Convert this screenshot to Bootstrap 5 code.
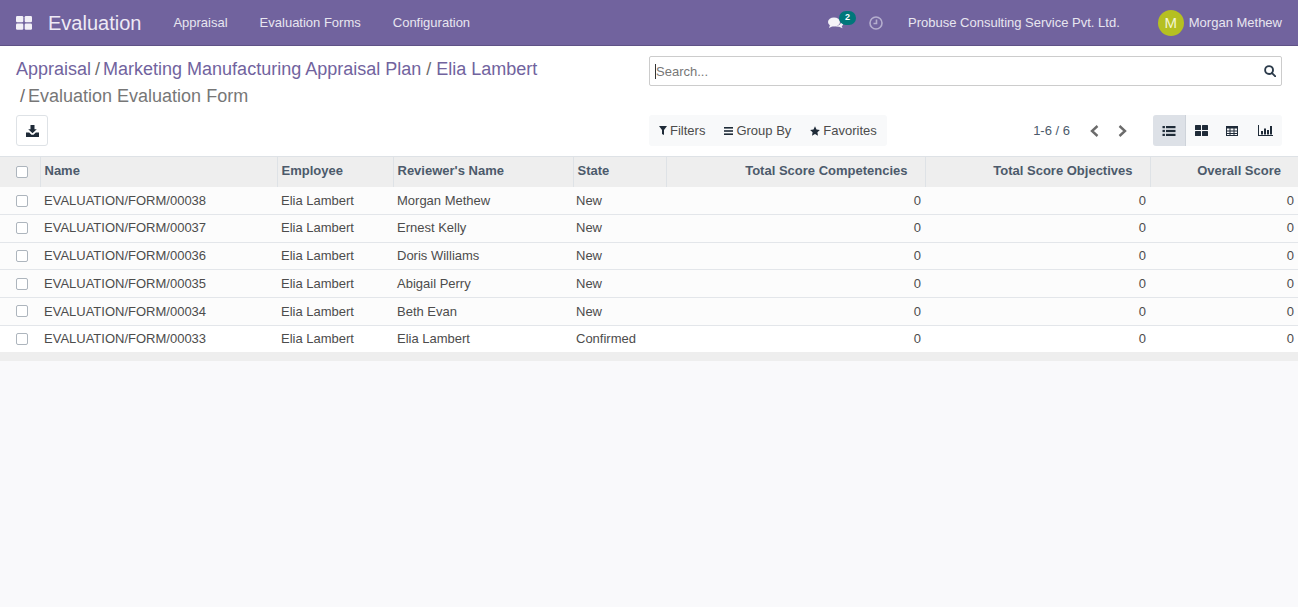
<!DOCTYPE html>
<html lang="en">
<head>
    <meta charset="UTF-8">
    <title>Evaluation</title>
    <link href="https://cdn.jsdelivr.net/npm/bootstrap@5.3.0/dist/css/bootstrap.min.css" rel="stylesheet">
    <style>
        body { background-color: #f9f9fb; font-family: "Liberation Sans", Arial, sans-serif; font-size: 13px; color: #4c4c4c; overflow: hidden; }
        .top-bar { height: 46px; background-color: #71639e; border-bottom: 1px solid #5f5286; color: #e8e6f0; font-size: 13px; padding: 0 16px; }
        .app-name { font-size: 20px; color: #eeeaf5; margin-left: 16px; margin-right: 32px; }
        .menu-link { color: #e8e6f0; text-decoration: none; margin-right: 32px; }
        .msg-wrap { position: relative; width: 17px; height: 14px; margin-right: 24px; }
        .msg-badge { position: absolute; left: 11px; top: -5px; width: 17px; height: 14px; border-radius: 7px; background-color: #00777a; color: #fff; font-size: 9px; font-weight: bold; line-height: 13px; text-align: center; }
        .company-name { margin: 0 38px 0 25px; }
        .avatar-dot { width: 26px; height: 26px; border-radius: 50%; background-color: #b5c021; color: #f3f5d0; font-size: 15px; line-height: 26px; text-align: center; margin-right: 5px; }
        .control-panel { background-color: #fff; height: 111px; padding: 10px 16px 0; border-bottom: 1px solid #dee2e6; }
        .left-side { width: 633px; flex: none; }
        .crumbs { font-size: 18px; line-height: 27px; height: 54px; color: #71639e; }
        .crumbs .sep { color: #6b6b6b; margin: 0 3px 0 4px; }
        .crumbs .sep.wide { margin: 0 5px; }
        .crumbs .cur { color: #777; }
        .btn-export { width: 32px; height: 31px; padding: 0; margin-top: 5px; background: #fff; border: 1px solid #dee2e6; border-radius: 3px; display: flex; align-items: center; justify-content: center; }
        .search-box { height: 30px; border: 1px solid #ccc; border-radius: 2px; padding: 0 5px; color: #777; background: #fff; }
        .search-text { padding-top: 2px; }
        .search-cursor { border-left: 1px solid #333; height: 15px; }
        .tool-row { margin-top: 29px; height: 31px; }
        .filter-group { background-color: #f8f9fa; border-radius: 3px; height: 31px; padding: 0 10px; gap: 19px; color: #4c4c4c; }
        .filter-item { gap: 3px; }
        .pager-text { color: #4c5a6b; margin-left: auto; margin-right: 20px; }
        .pager-prev { margin-right: 19px; }
        .view-group { background-color: #f8f9fa; border-radius: 3px; margin-left: 26px; height: 31px; }
        .view-item { width: 32px; height: 31px; display: flex; align-items: center; justify-content: center; }
        .view-item.on { background-color: #dde1e7; border-right: 1px solid #ced3da; border-radius: 3px 0 0 3px; width: 33px; }
        .view-item .shift-left { margin-right: 4px; }
        .view-item .shift-less { margin-right: 2px; }
        .data-list { width: 100%; table-layout: fixed; border-collapse: collapse; margin: 0; font-size: 13px; color: #4c4c4c; }
        .data-list th { background-color: #eeeeee; height: 29.7px; padding: 0 4px 2px; font-weight: bold; color: #4c5a6b; border-bottom: 0; vertical-align: middle; }
        .data-list th + th { border-left: 1px solid #dee2e6; }
        .data-list td { height: 27.7px; padding: 0 4px; background-color: #fcfcfc; border-top: 1px solid #e3e6ea; vertical-align: middle; }
        .data-list td:nth-child(5) { padding-left: 3px; }
        .data-list tbody tr:first-child td { border-top: 0; }
        .data-list tbody tr:first-child .tick-box { margin-top: 2px; }
        .data-list tbody tr:last-child td { background-color: #fff; height: 27px; }
        .data-list th.num-col { text-align: right; padding-right: 17px; }
        .data-list td.num-col { text-align: right; }
        .tick-box { display: block; width: 12px; height: 12px; border: 1px solid #adb5bd; border-radius: 2px; background: #fff; margin-left: 16px; }
        .data-list th:first-child, .data-list td:first-child { padding: 0; }
        .list-foot { height: 9px; background-color: #eeeeee; }
        .w-check { width: 40px; } .w-name { width: 237px; } .w-emp { width: 116px; } .w-rev { width: 180px; }
        .w-state { width: 93px; } .w-comp { width: 259px; } .w-obj { width: 225px; }
    </style>
</head>
<body>

    <!-- top navbar -->
    <nav class="top-bar d-flex align-items-center">
        <svg width="16" height="14" viewBox="0 0 16 14" fill="#f2f0f7"><rect width="7.3" height="6.2" rx="1.2"/><rect x="8.7" width="7.3" height="6.2" rx="1.2"/><rect y="7.6" width="7.3" height="6.2" rx="1.2"/><rect x="8.7" y="7.6" width="7.3" height="6.2" rx="1.2"/></svg>
        <span class="app-name">Evaluation</span>
        <a class="menu-link" href="#">Appraisal</a>
        <a class="menu-link" href="#">Evaluation Forms</a>
        <a class="menu-link" href="#">Configuration</a>
        <div class="ms-auto d-flex align-items-center">
            <div class="msg-wrap">
                <svg class="d-block" width="16" height="14" viewBox="0 0 16 14" fill="#f4f3f8"><ellipse cx="6" cy="6" rx="6" ry="4.6"/><path d="M2 9l-1 3 4-2z"/><path d="M13 4.5c2 1 3 2.5 2 4.2-.4.7-1 1.2-1.3 1.4l.8 2.2-3.4-1.6c-1.4.1-3-.1-4-.7 3.4.2 6.8-2 5.900-5.500z"/></svg>
                <span class="msg-badge">2</span>
            </div>
            <svg width="14" height="14" viewBox="0 0 14 14" fill="none" stroke="#b5aece" stroke-width="1.6"><circle cx="7" cy="7" r="6"/><path d="M7.500 3.500v4H4.500"/></svg>
            <span class="company-name">Probuse Consulting Service Pvt. Ltd.</span>
            <span class="avatar-dot">M</span>
            <span>Morgan Methew</span>
        </div>
    </nav>

    <!-- control panel -->
    <div class="control-panel d-flex">
        <div class="left-side">
            <div class="crumbs">
                <div><span>Appraisal</span><span class="sep">/</span><span>Marketing Manufacturing Appraisal Plan</span><span class="sep wide">/</span><span>Elia Lambert</span></div>
                <div><span class="sep">/</span><span class="cur">Evaluation Evaluation Form</span></div>
            </div>
            <button class="btn-export" type="button" aria-label="Export">
                <svg width="13" height="12" viewBox="0 0 13 12" fill="#1f2b38"><path d="M4.500 0h4v4.200h2.300L6.500 8.300 2.200 4.200h2.300z"/><path d="M0 7.500h3.200l2.300 2.200h2l2.300-2.200H13V12H0z"/></svg>
            </button>
        </div>
        <div class="flex-grow-1">
            <div class="search-box d-flex align-items-center">
                <span class="search-cursor"></span><span class="search-text">Search...</span>
                <svg class="ms-auto" width="12" height="12" viewBox="0 0 13 13" fill="none" stroke="#2b3a4a" stroke-width="2"><circle cx="5.500" cy="5.500" r="4.300"/><path d="M8.700 8.700L12.300 12.300" stroke-linecap="round"/></svg>
            </div>
            <div class="tool-row d-flex align-items-center">
                <div class="filter-group d-flex align-items-center">
                    <span class="filter-item d-flex align-items-center">
                        <svg width="8" height="9" viewBox="0 0 8 9" fill="#1f2b38"><path d="M0 0h8L5 4v5L3 8V4z"/></svg>Filters</span>
                    <span class="filter-item d-flex align-items-center">
                        <svg width="9" height="8" viewBox="0 0 9 8" fill="#1f2b38"><rect width="9" height="1.600"/><rect y="3.200" width="9" height="1.600"/><rect y="6.400" width="9" height="1.600"/></svg>Group By</span>
                    <span class="filter-item d-flex align-items-center">
                        <svg width="10" height="10" viewBox="0 0 10 10" fill="#1f2b38"><path d="M5 .3l1.500 3.100 3.400.5-2.500 2.400.6 3.400L5 8.100 2 9.700l.6-3.400L.1 3.900l3.400-.5z"/></svg>Favorites</span>
                </div>
                <span class="pager-text">1-6 / 6</span>
                <svg class="pager-prev" width="9" height="12" viewBox="0 0 9 12" fill="none" stroke="#6b6b6b" stroke-width="2.400"><path d="M7.500 1L2 6l5.500 5"/></svg>
                <svg width="9" height="12" viewBox="0 0 9 12" fill="none" stroke="#6b6b6b" stroke-width="2.400"><path d="M1.500 1L7 6l-5.500 5"/></svg>
                <div class="view-group d-flex">
                    <div class="view-item on"><svg width="14" height="10" viewBox="0 0 13 10" fill="#1f2b38"><rect width="2.400" height="2.200"/><rect x="3.500" width="9.500" height="2.200"/><rect y="3.900" width="2.400" height="2.200"/><rect x="3.500" y="3.900" width="9.500" height="2.200"/><rect y="7.800" width="2.400" height="2.200"/><rect x="3.500" y="7.800" width="9.500" height="2.200"/></svg></div>
                    <div class="view-item"><svg class="shift-less" width="13" height="11" viewBox="0 0 13 11" fill="#1f2b38"><rect width="6" height="5" rx=".5"/><rect x="7" width="6" height="5" rx=".5"/><rect y="6" width="6" height="5" rx=".5"/><rect x="7" y="6" width="6" height="5" rx=".5"/></svg></div>
                    <div class="view-item"><svg class="shift-left" width="12" height="10" viewBox="0 0 12 10" fill="none" stroke="#1f2b38"><rect x=".5" y=".5" width="11" height="9"/><path d="M.5 1.500h11" stroke-width="2"/><path d="M.5 5h11M.5 7.500h11M4 1v9M8 1v9"/></svg></div>
                    <div class="view-item"><svg class="shift-less" width="15" height="11" viewBox="0 0 15 11" fill="#1f2b38"><rect width="1" height="11"/><rect y="10" width="15" height="1"/><rect x="3" y="6" width="2" height="3.500"/><rect x="6" y="3.500" width="2" height="6"/><rect x="9" y="5" width="2" height="4.500"/><rect x="12" y="1" width="2" height="8.500"/></svg></div>
                </div>
            </div>
        </div>
    </div>

    <!-- list -->
    <table class="data-list">
        <thead>
            <tr>
                <th class="w-check"><span class="tick-box"></span></th>
                <th class="w-name">Name</th>
                <th class="w-emp">Employee</th>
                <th class="w-rev">Reviewer's Name</th>
                <th class="w-state">State</th>
                <th class="w-comp num-col">Total Score Competencies</th>
                <th class="w-obj num-col">Total Score Objectives</th>
                <th class="num-col">Overall Score</th>
            </tr>
        </thead>
        <tbody>
            <tr><td><span class="tick-box"></span></td><td>EVALUATION/FORM/00038</td><td>Elia Lambert</td><td>Morgan Methew</td><td>New</td><td class="num-col">0</td><td class="num-col">0</td><td class="num-col">0</td></tr>
            <tr><td><span class="tick-box"></span></td><td>EVALUATION/FORM/00037</td><td>Elia Lambert</td><td>Ernest Kelly</td><td>New</td><td class="num-col">0</td><td class="num-col">0</td><td class="num-col">0</td></tr>
            <tr><td><span class="tick-box"></span></td><td>EVALUATION/FORM/00036</td><td>Elia Lambert</td><td>Doris Williams</td><td>New</td><td class="num-col">0</td><td class="num-col">0</td><td class="num-col">0</td></tr>
            <tr><td><span class="tick-box"></span></td><td>EVALUATION/FORM/00035</td><td>Elia Lambert</td><td>Abigail Perry</td><td>New</td><td class="num-col">0</td><td class="num-col">0</td><td class="num-col">0</td></tr>
            <tr><td><span class="tick-box"></span></td><td>EVALUATION/FORM/00034</td><td>Elia Lambert</td><td>Beth Evan</td><td>New</td><td class="num-col">0</td><td class="num-col">0</td><td class="num-col">0</td></tr>
            <tr><td><span class="tick-box"></span></td><td>EVALUATION/FORM/00033</td><td>Elia Lambert</td><td>Elia Lambert</td><td>Confirmed</td><td class="num-col">0</td><td class="num-col">0</td><td class="num-col">0</td></tr>
        </tbody>
    </table>
    <div class="list-foot"></div>

    <script src="https://cdn.jsdelivr.net/npm/bootstrap@5.3.0/dist/js/bootstrap.bundle.min.js"></script>
</body>
</html>
